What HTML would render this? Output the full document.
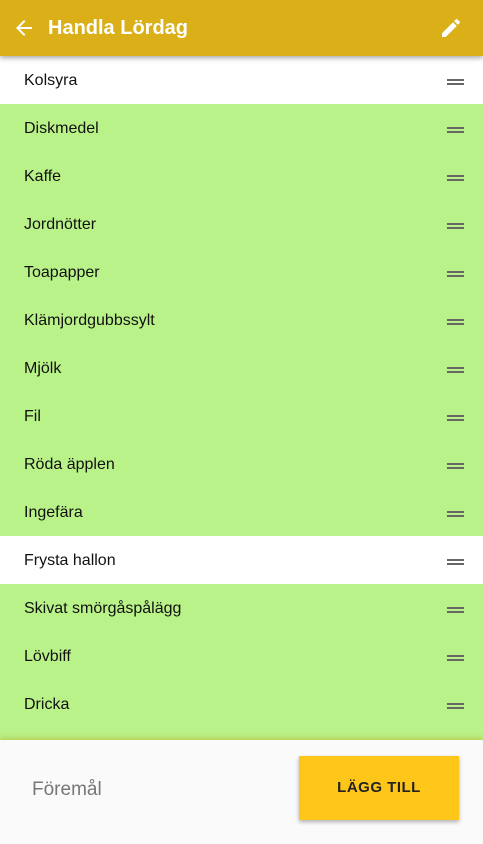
<!DOCTYPE html>
<html><head><style>
body{margin:0;width:483px;height:844px;overflow:hidden;font-family:"Liberation Sans",sans-serif;background:#b9f288;position:relative}
.hd{position:absolute;top:0;left:0;width:483px;height:56px;background:#daaf17;box-shadow:0 2px 5px rgba(0,0,0,.35);z-index:2}
.hd .t{position:absolute;left:48px;top:17px;color:#fff;font-weight:bold;font-size:20px}
.row{position:absolute;left:0;width:483px;height:48px;font-size:16px;color:#111}
.row span{position:absolute;left:24px;top:16px}
.row i{position:absolute;left:447px;top:23px;width:17px;height:2px;background:#666;}
.row i:after{content:"";position:absolute;left:0;top:4px;width:17px;height:2px;background:#666}
.w{background:#fff}
.ft{position:absolute;top:740px;left:0;width:483px;height:104px;background:#fafafa;box-shadow:0 -2px 5px rgba(180,170,40,.5)}
.ft .p{position:absolute;left:32px;top:39px;font-size:19px;color:#777}
.btn{position:absolute;left:299px;top:16px;width:160px;height:64px;background:#ffc61a;box-shadow:0 2px 4px rgba(0,0,0,.3);font-weight:bold;font-size:15px;letter-spacing:.5px;color:#222;text-align:center;line-height:64px}
</style></head><body>
<div class="hd">
<svg style="position:absolute;left:12px;top:16px" width="24" height="24" viewBox="0 0 24 24"><path fill="#fff" d="M20 11H7.83l5.59-5.59L12 4l-8 8 8 8 1.41-1.41L7.83 13H20v-2z"/></svg>
<div class="t">Handla Lördag</div>
<svg style="position:absolute;left:439px;top:16px" width="24" height="24" viewBox="0 0 24 24"><path fill="#fff" d="M3 17.25V21h3.75L17.81 9.94l-3.75-3.75L3 17.25zM20.71 7.04a1 1 0 000-1.410l-2.34-2.34a1 1 0 00-1.41 0l-1.83 1.83 3.75 3.75 1.83-1.83z"/></svg>
</div>
<div class="row w" style="top:56px"><span>Kolsyra</span><i></i></div>
<div class="row" style="top:104px"><span>Diskmedel</span><i></i></div>
<div class="row" style="top:152px"><span>Kaffe</span><i></i></div>
<div class="row" style="top:200px"><span>Jordnötter</span><i></i></div>
<div class="row" style="top:248px"><span>Toapapper</span><i></i></div>
<div class="row" style="top:296px"><span>Klämjordgubbssylt</span><i></i></div>
<div class="row" style="top:344px"><span>Mjölk</span><i></i></div>
<div class="row" style="top:392px"><span>Fil</span><i></i></div>
<div class="row" style="top:440px"><span>Röda äpplen</span><i></i></div>
<div class="row" style="top:488px"><span>Ingefära</span><i></i></div>
<div class="row w" style="top:536px"><span>Frysta hallon</span><i></i></div>
<div class="row" style="top:584px"><span>Skivat smörgåspålägg</span><i></i></div>
<div class="row" style="top:632px"><span>Lövbiff</span><i></i></div>
<div class="row" style="top:680px"><span>Dricka</span><i></i></div>
<div class="ft"><div class="p">Föremål</div><div class="btn">LÄGG TILL</div></div>
</body></html>
